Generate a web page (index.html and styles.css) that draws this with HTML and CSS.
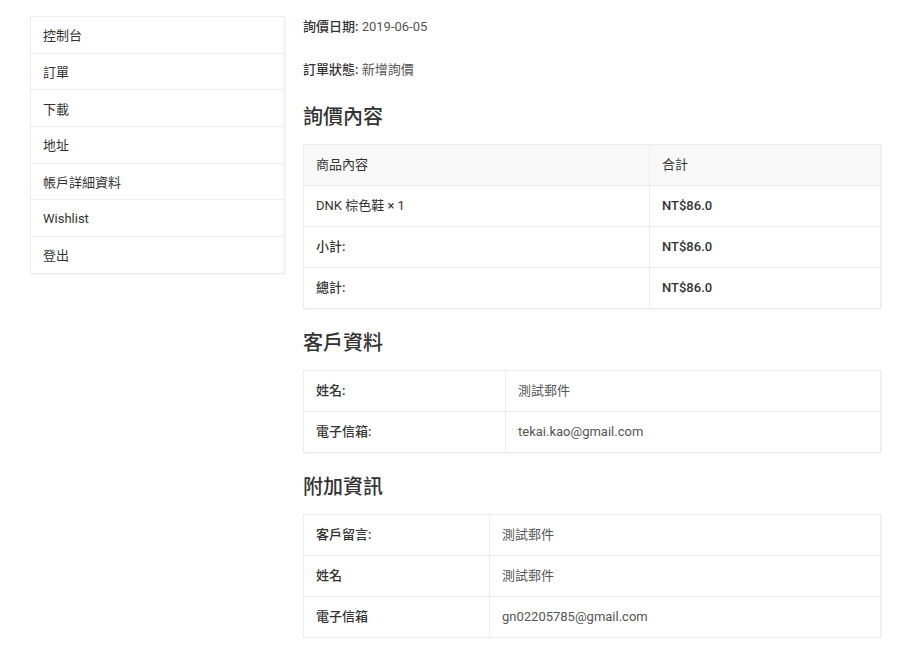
FILE: index.html
```html
<!DOCTYPE html>
<html lang="zh-Hant">
<head>
<meta charset="utf-8">
<title>詢價內容</title>
<link rel="stylesheet" href="styles.css">
</head>
<body>
<div class="page">
  <nav class="sidebar">
    <ul class="menu">
      <li class="menu-item">控制台</li>
      <li class="menu-item">訂單</li>
      <li class="menu-item">下載</li>
      <li class="menu-item">地址</li>
      <li class="menu-item">帳戶詳細資料</li>
      <li class="menu-item">Wishlist</li>
      <li class="menu-item">登出</li>
    </ul>
  </nav>
  <main class="content">
    <p class="meta"><strong>詢價日期:</strong> 2019-06-05</p>
    <p class="meta"><strong>訂單狀態:</strong> 新增詢價</p>

    <h2 class="section-title">詢價內容</h2>
    <table class="data-table">
      <colgroup><col class="col-order"><col></colgroup>
      <thead>
        <tr><th>商品內容</th><th>合計</th></tr>
      </thead>
      <tbody>
        <tr><td class="dark">DNK 棕色鞋 <span class="qty">× 1</span></td><td><strong>NT$86.0</strong></td></tr>
      </tbody>
      <tfoot>
        <tr><th>小計:</th><td><strong>NT$86.0</strong></td></tr>
        <tr><th>總計:</th><td><strong>NT$86.0</strong></td></tr>
      </tfoot>
    </table>

    <h2 class="section-title">客戶資料</h2>
    <table class="data-table">
      <colgroup><col class="col-customer"><col></colgroup>
      <tbody>
        <tr><th>姓名:</th><td>測試郵件</td></tr>
        <tr><th>電子信箱:</th><td>tekai.kao@gmail.com</td></tr>
      </tbody>
    </table>

    <h2 class="section-title">附加資訊</h2>
    <table class="data-table">
      <colgroup><col class="col-extra"><col></colgroup>
      <tbody>
        <tr><th>客戶留言:</th><td>測試郵件</td></tr>
        <tr><th>姓名</th><td>測試郵件</td></tr>
        <tr><th>電子信箱</th><td>gn02205785@gmail.com</td></tr>
      </tbody>
    </table>
  </main>
</div>
</body>
</html>
```

FILE: styles.css
```css
* { box-sizing: border-box; }

html, body {
  margin: 0;
  padding: 0;
  background: #fff;
}

body {
  font-family: Roboto, "Noto Sans CJK TC", "Liberation Sans", sans-serif;
  font-size: 13px;
  color: #333;
}

.page {
  display: flex;
  align-items: flex-start;
  gap: 18px;
  padding: 16px 19px 0 30px;
}

.sidebar {
  width: 255px;
  flex: none;
}

.menu {
  list-style: none;
  margin: 0;
  padding: 0;
  border: 1px solid #ececec;
  box-shadow: 1px 1px 2px rgba(0, 0, 0, 0.04);
}

.menu-item {
  height: 36.7px;
  display: flex;
  align-items: center;
  padding: 0 12px;
  color: #333;
  border-top: 1px solid #ececec;
}

.menu-item:first-child { border-top: 0; height: 35.7px; }

.content {
  flex: 1;
  min-width: 0;
}

.meta {
  margin: 0 0 21px;
  line-height: 22px;
  color: #555;
}

.meta strong {
  color: #333;
  font-weight: 500;
}

.section-title {
  margin: 22px 0 13px;
  font-size: 20px;
  line-height: 28px;
  font-weight: 500;
  color: #333;
}

.data-table + .section-title { margin-top: 20px; }

.data-table {
  width: 100%;
  border-collapse: collapse;
  table-layout: fixed;
  border: 1px solid #ececec;
  box-shadow: 1px 1px 2px rgba(0, 0, 0, 0.05);
}

.col-order { width: 346px; }
.col-customer { width: 202px; }
.col-extra { width: 186px; }

.data-table th,
.data-table td {
  height: 41px;
  padding: 0 12px;
  text-align: left;
  vertical-align: middle;
  border: 1px solid #ececec;
  line-height: 18px;
}

.data-table th {
  font-weight: 500;
  color: #333;
}

.data-table td {
  font-weight: 400;
  color: #555;
}

.data-table td.dark { color: #333; }

.data-table thead th {
  background: #f8f8f8;
  font-weight: 400;
}

.data-table td strong {
  color: #333;
  font-weight: 500;
}
```
